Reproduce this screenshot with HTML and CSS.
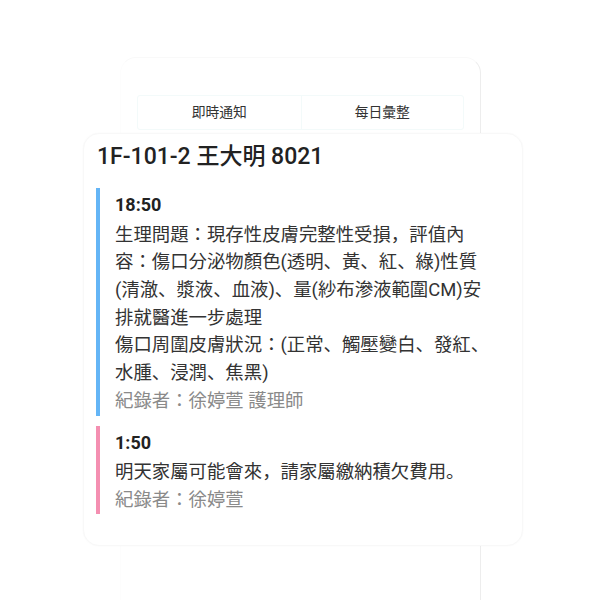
FILE: index.html
```html
<!DOCTYPE html>
<html lang="zh-Hant">
<head>
<meta charset="utf-8">
<title>護理紀錄</title>
<link rel="stylesheet" href="styles.css">
</head>
<body>
<div class="stage">
  <div class="phone">
    <div class="tabs">
      <div class="tab">即時通知</div>
      <div class="tab">每日彙整</div>
    </div>
  </div>
  <div class="note-card">
    <h1 class="patient">1F-101-2 王大明 8021</h1>
    <div class="entry entry-blue">
      <div class="time">18:50</div>
      <p class="body">生理問題：現存性皮膚完整性受損，評值內<br>容：傷口分泌物顏色(透明、黃、紅、綠)性質<br>(清澈、漿液、血液)、量(紗布滲液範圍CM)安<br>排就醫進一步處理<br>傷口周圍皮膚狀況：(正常、觸壓變白、發紅、<br>水腫、浸潤、焦黑)</p>
      <div class="recorder">紀錄者：徐婷萱 護理師</div>
    </div>
    <div class="entry entry-pink">
      <div class="time">1:50</div>
      <p class="body">明天家屬可能會來，請家屬繳納積欠費用。</p>
      <div class="recorder">紀錄者：徐婷萱</div>
    </div>
  </div>
</div>
</body>
</html>
```

FILE: styles.css
```css
* { box-sizing: border-box; }
html, body {
  margin: 0;
  padding: 0;
  background: #ffffff;
}
body {
  font-family: Roboto, "Noto Sans CJK JP", "Noto Sans CJK TC", sans-serif;
  font-feature-settings: "locl" 0;
  color: #333333;
  width: 600px;
  height: 600px;
  overflow: hidden;
}
.stage {
  display: grid;
  width: 600px;
  height: 600px;
  overflow: hidden;
}
.phone,
.note-card {
  grid-area: 1 / 1;
  align-self: start;
  justify-self: start;
}
.phone {
  margin: 57px 0 0 120px;
  width: 361px;
  height: 543px;
  border: 1px solid #fdfdfd;
  border-bottom: none;
  border-right-color: #ededed;
  border-top-color: #f9f9f9;
  border-radius: 16px 16px 0 0;
  padding: 37px 16px 0 16px;
}
.tabs {
  display: grid;
  grid-template-columns: 1fr 1fr;
  border: 1px solid #f3fafa;
  border-radius: 3px;
  height: 35px;
}
.tab {
  display: flex;
  align-items: center;
  justify-content: center;
  font-size: 13.8px;
  color: #333333;
  padding-bottom: 3px;
}
.tab + .tab {
  border-left: 1px solid #f3fafa;
}
.note-card {
  position: relative;
  z-index: 1;
  margin: 133px 0 0 83px;
  width: 440px;
  background: #ffffff;
  border-radius: 16px;
  border: 1px solid #f8f8f8;
  box-shadow: 0 0 2px rgba(0, 0, 0, 0.03);
  padding: 7px 30px 31px 12px;
}
.patient {
  margin: 0 0 15px 0;
  font-size: 23px;
  font-weight: 500;
  line-height: 32px;
  color: #222222;
  padding-left: 1px;
}
.entry {
  border-left: 4px solid #64b5f6;
  padding: 3px 0 1px 15px;
}
.entry-blue { border-left-color: #64b5f6; }
.entry-pink {
  border-left-color: #f48fb1;
  margin-top: 10px;
  padding-bottom: 0;
}
.time {
  font-size: 18px;
  font-weight: 700;
  line-height: 27.6px;
  color: #222222;
  margin-bottom: 2px;
}
.body {
  margin: 0;
  font-size: 18.4px;
  line-height: 27.7px;
  color: #333333;
  white-space: nowrap;
}
.recorder {
  font-size: 18.4px;
  line-height: 27.7px;
  color: #8a8a8a;
}
```
